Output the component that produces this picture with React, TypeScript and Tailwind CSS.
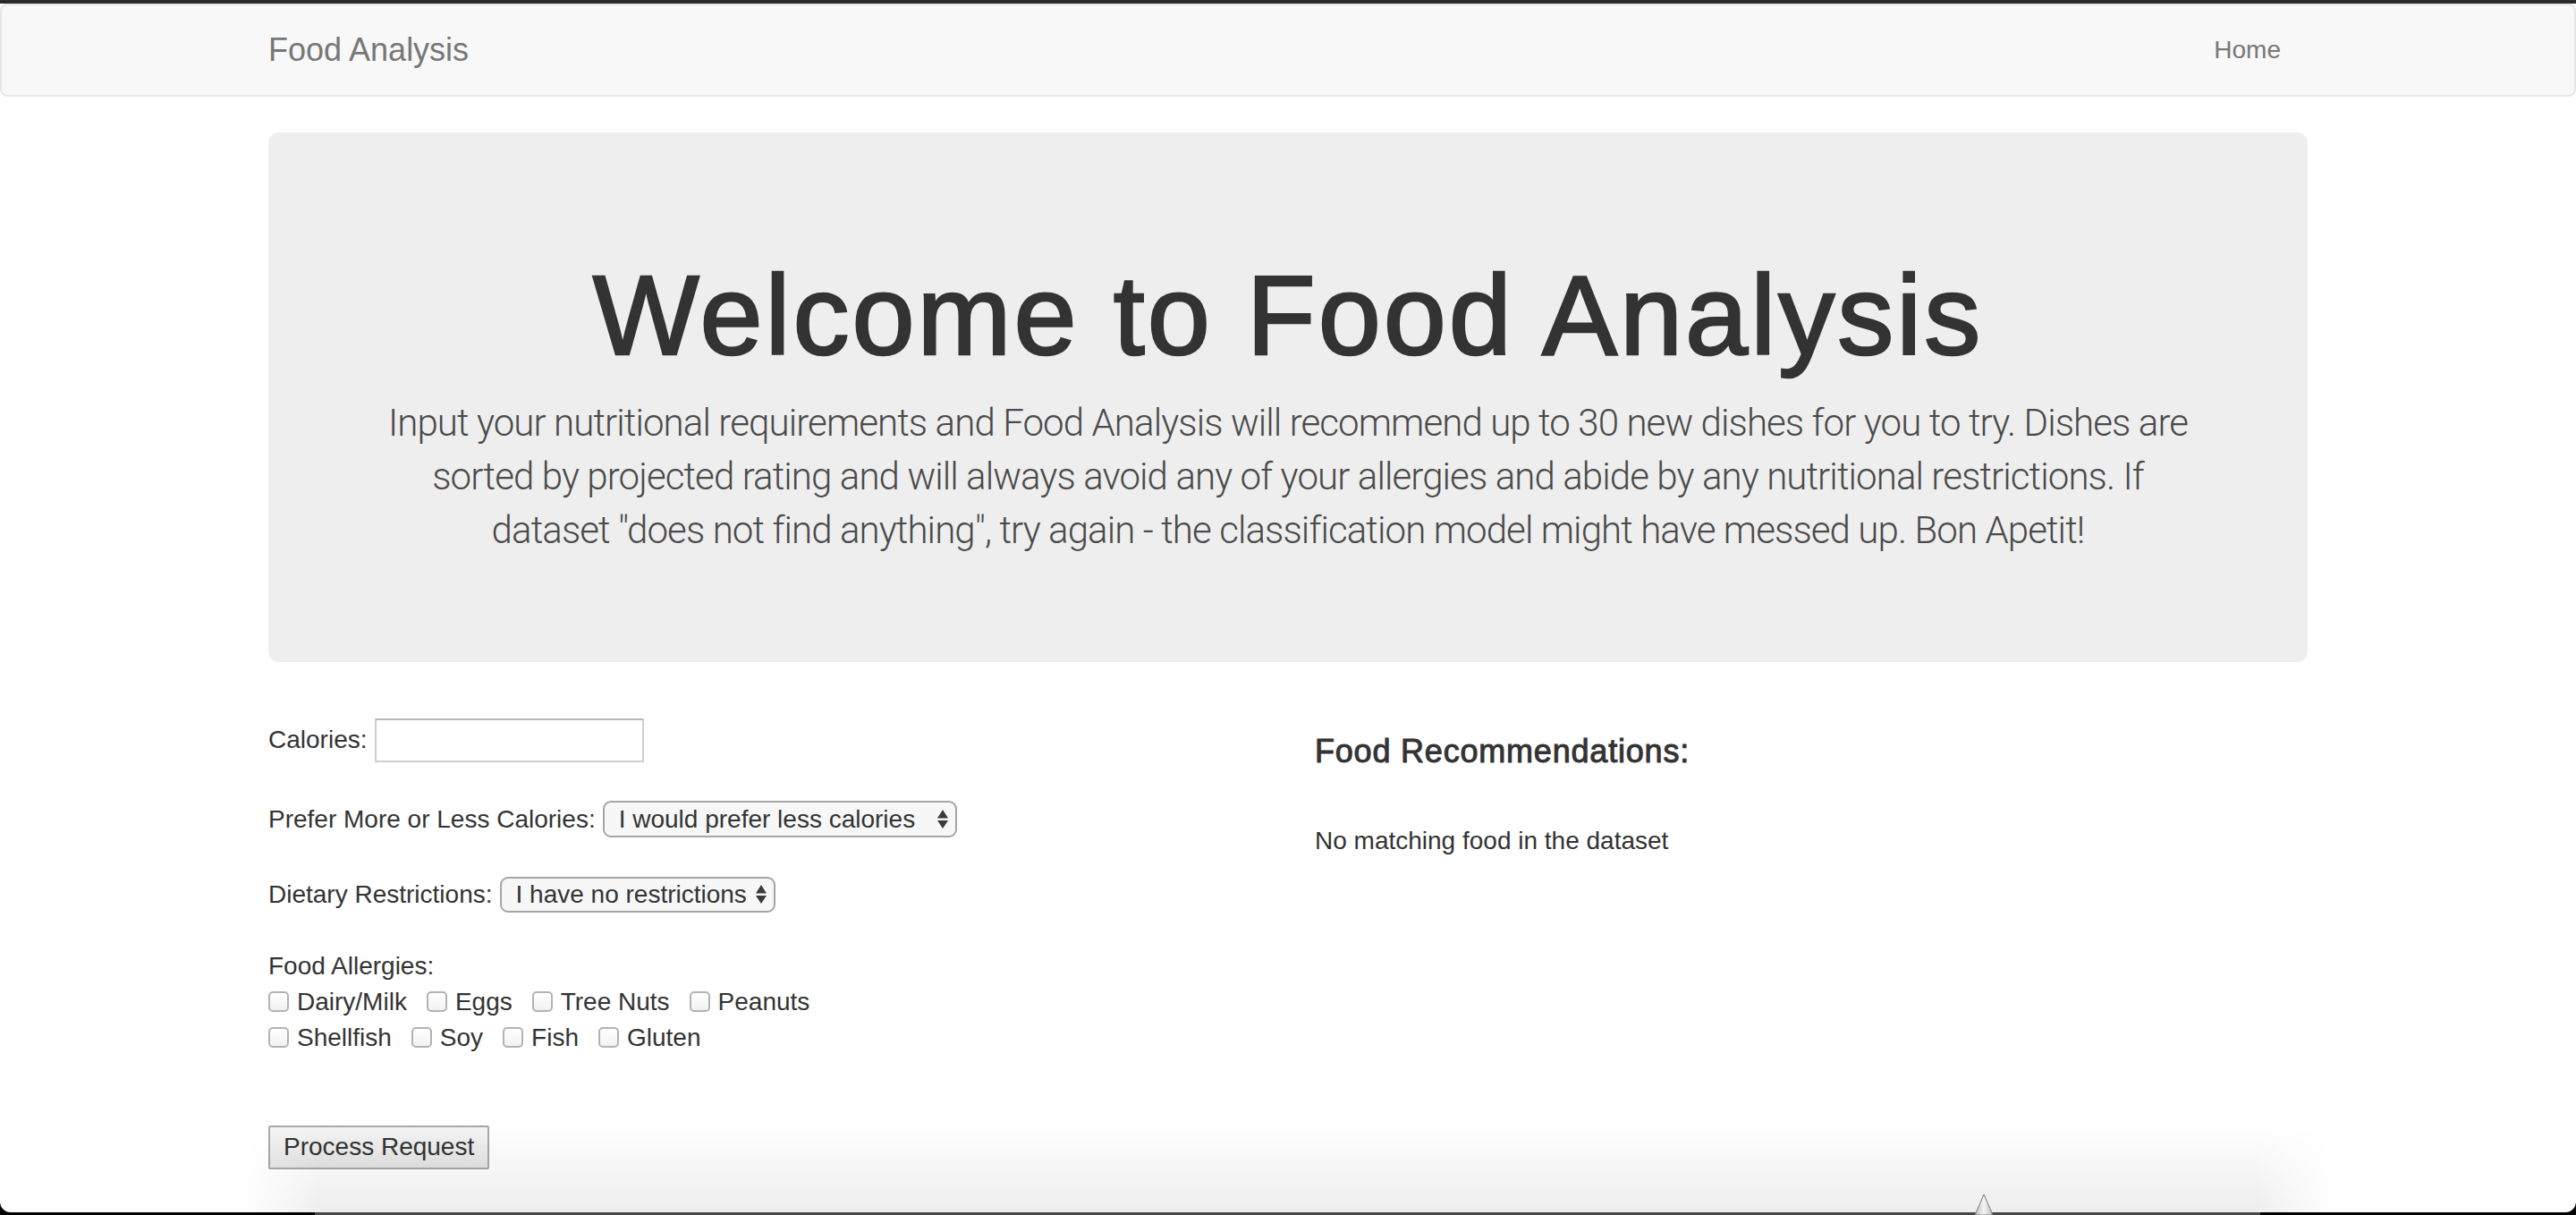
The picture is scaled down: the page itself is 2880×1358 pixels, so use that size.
import React from "react";

const allergiesRow1 = ["Dairy/Milk", "Eggs", "Tree Nuts", "Peanuts"];
const allergiesRow2 = ["Shellfish", "Soy", "Fish", "Gluten"];

const Arrows = () => (
    <svg width="12" height="21" viewBox="0 0 12 21" className="shrink-0">
        <polygon points="6,0 0,9.5 12,9.5" fill="#3a3a3a" />
        <polygon points="0,12 12,12 6,21" fill="#3a3a3a" />
    </svg>
);

const FakeSelect = ({ value, className }: { value: string; className: string }) => (
    <div
        className={
            "flex items-center justify-between border-2 border-[#a5a5a5] rounded-[9px] bg-[#f7f7f7] pl-[16px] pr-[8px] text-[28px] text-[#333] " +
            className
        }
    >
        <span>{value}</span>
        <Arrows />
    </div>
);

const Checkbox = ({ label }: { label: string }) => (
    <label className="flex items-center gap-[9px]">
        <span className="w-[23px] h-[23px] rounded-[5px] border-2 border-[#b3b3b3] bg-linear-to-b from-white to-[#f2f2f2]" />
        <span>{label}</span>
    </label>
);

export default function App() {
    return (
        <div className="relative w-[2880px] h-[1358px] overflow-hidden bg-black font-['Liberation_Sans',Arial,sans-serif] text-[#333]">
            <div className="h-[4px] bg-[#2a2a2a]" />
            <div className="h-[1351px] bg-white rounded-b-[12px] overflow-hidden">
                {/* navbar */}
                <nav className="h-[104px] border-2 border-[#e7e7e7] bg-[#f8f8f8] rounded-[8px] flex items-center justify-between pl-[298px] pr-[328px]">
                    <span className="text-[36px] text-[#777]">Food Analysis</span>
                    <span className="text-[28px] text-[#777]">Home</span>
                </nav>

                <div className="mx-[300px] mt-[40px]">
                    {/* jumbotron */}
                    <div className="bg-[#eee] rounded-[12px] px-[120px] pt-[96px] pb-[87px] text-center">
                        <h1 className="mt-[40px] mb-[20px] text-[126px] leading-[1.1] tracking-[3px] text-[#333] [-webkit-text-stroke:2.5px_#333]">
                            Welcome to Food Analysis
                        </h1>
                        <p className="mb-[30px] -mx-[60px] font-['Roboto',sans-serif] font-light text-[42px] leading-[60px] tracking-[-0.9px] text-[#4a4a4a] whitespace-nowrap">
                            Input your nutritional requirements and Food Analysis will recommend up to 30 new dishes for you to try. Dishes are
                            <br />
                            sorted by projected rating and will always avoid any of your allergies and abide by any nutritional restrictions. If
                            <br />
                            dataset "does not find anything", try again - the classification model might have messed up. Bon Apetit!
                        </p>
                    </div>

                    <div className="grid grid-cols-2 gap-[60px] mt-[60px] text-[28px]">
                        {/* form */}
                        <div className="flex flex-col">
                            <div className="mt-[3px] flex items-center gap-[9px]">
                                <span>Calories:</span>
                                <input className="w-[301px] h-[49px] border-2 border-[#cfcfcf] border-t-[#b8b8b8] bg-white outline-none" />
                            </div>
                            <div className="mt-[43px] flex items-center gap-[8px]">
                                <span>Prefer More or Less Calories:</span>
                                <FakeSelect value="I would prefer less calories" className="w-[396px] h-[41px]" />
                            </div>
                            <div className="mt-[42px] flex items-center gap-[8px]">
                                <span>Dietary Restrictions:</span>
                                <FakeSelect value="I have no restrictions" className="w-[308px] h-[40px]" />
                            </div>
                            <div className="mt-[39px] leading-[40px]">Food Allergies:</div>
                            <div className="flex items-center gap-[22px] h-[40px]">
                                {allergiesRow1.map((a) => (
                                    <Checkbox key={a} label={a} />
                                ))}
                            </div>
                            <div className="flex items-center gap-[22px] h-[40px]">
                                {allergiesRow2.map((a) => (
                                    <Checkbox key={a} label={a} />
                                ))}
                            </div>
                            <div className="mt-[78px]">
                                <button className="h-[49px] px-[15px] border-2 border-[#a8a8a8] rounded-[2px] bg-linear-to-b from-[#f5f5f5] to-[#e5e5e5] text-[28px] text-[#333]">
                                    Process Request
                                </button>
                            </div>
                        </div>

                        {/* results */}
                        <div>
                            <h4 className="mt-[20px] text-[36px] leading-[40px] tracking-[0.8px] [-webkit-text-stroke:1px_#333]">
                                Food Recommendations:
                            </h4>
                            <p className="mt-[60px] leading-[40px]">No matching food in the dataset</p>
                        </div>
                    </div>
                </div>
            </div>

            {/* window shadow / dock edge at the bottom */}
            <div className="absolute left-[270px] right-[270px] bottom-[3px] h-[100px] bg-linear-to-b from-transparent to-[rgba(0,0,0,0.07)] [mask-image:linear-gradient(to_right,transparent,black_90px,black_calc(100%_-_90px),transparent)]" />
            <div className="absolute left-[352px] w-[2175px] bottom-0 h-[3px] bg-[#464646]" />
            <svg className="absolute left-[2206px] bottom-0" width="24" height="24" viewBox="0 0 24 24">
                <defs>
                    <linearGradient id="tri" x1="0" x2="1" y1="0" y2="0">
                        <stop offset="0" stopColor="#bdbdbd" />
                        <stop offset="0.5" stopColor="#f4f4f4" />
                        <stop offset="1" stopColor="#bdbdbd" />
                    </linearGradient>
                </defs>
                <polygon points="12,1 2,24 22,24" fill="url(#tri)" stroke="#7a7a7a" strokeWidth="1" />
            </svg>
        </div>
    );
}
